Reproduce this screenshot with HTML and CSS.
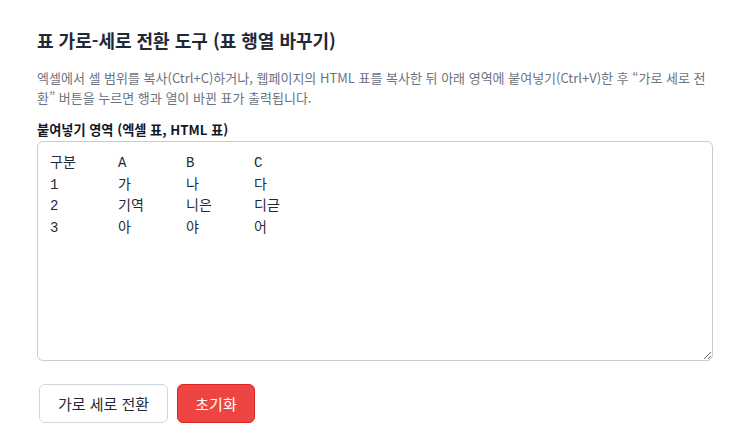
FILE: index.html
```html
<!DOCTYPE html>
<html lang="ko">
<head>
<meta charset="utf-8">
<link rel="stylesheet" href="styles.css">
</head>
<body>
<main class="page">
  <h1 class="title">표 가로-세로 전환 도구 (표 행열 바꾸기)</h1>
  <p class="desc">엑셀에서 셀 범위를 복사(Ctrl+C)하거나, 웹페이지의 HTML 표를 복사한 뒤 아래 영역에 붙여넣기(Ctrl+V)한 후 “가로 세로 전환” 버튼을 누르면 행과 열이 바뀐 표가 출력됩니다.</p>
  <label class="label" for="src">붙여넣기 영역 (엑셀 표, HTML 표)</label>
  <textarea id="src" class="area">구분	A	B	C
1	가	나	다
2	기역	니은	디귿
3	아	야	어</textarea>
  <div class="actions">
    <button class="btn btn-outline">가로 세로 전환</button>
    <button class="btn btn-red">초기화</button>
  </div>
</main>
</body>
</html>
```

FILE: styles.css
```css
html, body {
  margin: 0;
  padding: 0;
  background: #ffffff;
}
.page {
  padding: 26px 36px 0 37px;
  font-family: "Noto Sans CJK KR", "Noto Sans", sans-serif;
  color: #1f2937;
}
.title {
  margin: 0 0 14px 0;
  font-size: 18px;
  line-height: 28px;
  font-weight: 700;
  color: #1f2937;
}
.desc {
  margin: 0 0 13px 0;
  font-size: 13px;
  line-height: 20px;
  color: #6b7280;
}
.label {
  display: block;
  font-size: 13.2px;
  line-height: 18px;
  font-weight: 700;
  color: #111827;
  margin-bottom: 2px;
}
.area {
  display: block;
  box-sizing: border-box;
  width: 100%;
  height: 220px;
  margin: 0;
  padding: 11px 12px;
  border: 1px solid #cccccc;
  border-radius: 6px;
  font-family: "Liberation Mono", "Noto Sans CJK KR", monospace;
  font-size: 14px;
  line-height: 21.7px;
  tab-size: 68px;
  -moz-tab-size: 68px;
  color: #1f2937;
  resize: vertical;
  outline: none;
}
.actions {
  display: flex;
  gap: 9px;
  margin-top: 23px;
  padding-left: 2px;
}
.btn {
  box-sizing: border-box;
  height: 39px;
  padding: 0;
  border-radius: 6px;
  font-family: "Noto Sans CJK KR", sans-serif;
  font-size: 15px;
  white-space: nowrap;
  cursor: pointer;
}
.btn-outline {
  background: #ffffff;
  border: 1px solid #d1d5db;
  color: #1f2937;
  width: 129px;
}
.btn-red {
  background: #ef4444;
  border: 1px solid #dc2626;
  color: #ffffff;
  width: 78px;
}
```
